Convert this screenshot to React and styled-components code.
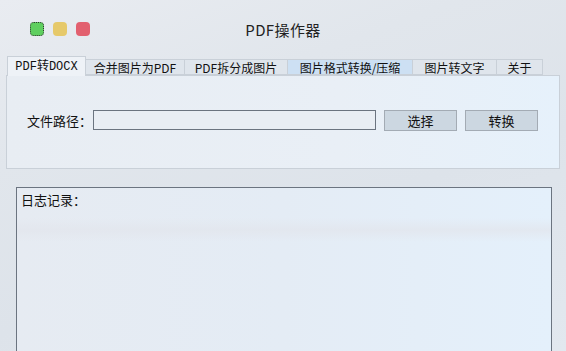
import React, { useState } from "react"
import styled, { createGlobalStyle } from "styled-components"

const Global = createGlobalStyle`
  html, body {
    margin: 0;
    padding: 0;
    width: 566px;
    height: 351px;
    overflow: hidden;
  }
  body {
    font-family: "Noto Sans CJK SC", "Liberation Sans", sans-serif;
    color: #111;
  }
`

const Window = styled.div`
  width: 566px;
  height: 351px;
  overflow: hidden;
  display: flex;
  flex-direction: column;
  background: linear-gradient(160deg, #e9ecf1 0%, #e1e6ec 30%, #dde3ea 60%, #e2e8ef 100%);
`

const TitleBar = styled.div`
  position: relative;
  height: 56px;
  display: flex;
  align-items: center;
  justify-content: center;
`

const Lights = styled.div`
  position: absolute;
  left: 30px;
  top: 22px;
  display: flex;
  gap: 9px;
`

const Light = styled.span`
  width: 14px;
  height: 14px;
  border-radius: 4px;
  background: ${p => p.color};
  box-sizing: border-box;
  border: ${p => (p.focus ? "1px dotted #333" : "none")};
`

const Title = styled.div`
  font-size: 15px;
  color: #222;
  padding-top: 2px;
  letter-spacing: 0.4px;
`

const TabBar = styled.div`
  display: flex;
  align-items: flex-end;
  height: 19px;
  padding-left: 7px;
`

const Tab = styled.div`
  box-sizing: border-box;
  width: ${p => p.w}px;
  height: ${p => (p.active ? 20 : 16)}px;
  margin-bottom: ${p => (p.active ? -1 : 0)}px;
  display: flex;
  align-items: center;
  justify-content: center;
  padding-top: 1px;
  font-size: 12px;
  line-height: 1;
  font-family: ${p => (p.mono ? '"Liberation Mono", "Noto Sans CJK SC", monospace' : '"Noto Sans CJK SC", sans-serif')};
  background: ${p => (p.active ? "#eef2f7" : p.hover ? "#cde0f3" : "#dfe5ec")};
  border: 1px solid #c9d0d8;
  border-bottom: ${p => (p.active ? "none" : "1px solid #c9d0d8")};
  border-left: ${p => (p.first || p.active ? "1px solid #c9d0d8" : "none")};
  position: relative;
  z-index: ${p => (p.active ? 2 : 1)};
  color: #111;
`

const Pane = styled.div`
  box-sizing: border-box;
  margin: 0 6px 0 6px;
  height: 94px;
  border: 1px solid #c9d0d8;
  background: linear-gradient(90deg, #e8edf3 0%, #e9eff6 60%, #e6f1fb 100%);
  display: flex;
  align-items: center;
  padding: 0 0 4px 20px;
`

const Label = styled.span`
  font-size: 13px;
  width: 66px;
`

const Input = styled.div`
  box-sizing: border-box;
  width: 283px;
  height: 20px;
  border: 1px solid #6b7480;
  background: #e9eef4;
`

const Button = styled.div`
  box-sizing: border-box;
  width: 73px;
  height: 21px;
  margin-left: ${p => p.gap}px;
  background: #ccd7e1;
  border: 1px solid #a3abb4;
  display: flex;
  align-items: center;
  justify-content: center;
  font-size: 13px;
`

const LogBox = styled.div`
  box-sizing: border-box;
  margin: 18px 0 0 16px;
  width: 536px;
  flex: 1;
  border: 1px solid #6b7480;
  border-bottom: none;
  background: linear-gradient(90deg, #e6ebf2 0%, #e4ecf5 50%, #e4f0fb 100%);
  padding: 2px 4px;
  font-size: 13px;
  position: relative;
`

const Band = styled.div`
  position: absolute;
  left: 0;
  right: 0;
  top: 30px;
  height: 24px;
  background: linear-gradient(180deg, rgba(225,228,235,0) 0%, rgba(226,229,236,0.7) 50%, rgba(225,228,235,0) 100%);
  pointer-events: none;
`

const LogText = styled.div`
  position: relative;
`

const tabs = [
  { label: "PDF转DOCX", w: 79, mono: true },
  { label: "合并图片为PDF", w: 99 },
  { label: "PDF拆分成图片", w: 103 },
  { label: "图片格式转换/压缩", w: 125 },
  { label: "图片转文字", w: 84 },
  { label: "关于", w: 46 },
]

export default function App() {
  const [active] = useState(0)
  return (
    <>
      <Global />
      <Window>
        <TitleBar>
          <Lights>
            <Light color="#5fcf5f" focus />
            <Light color="#e6c96a" />
            <Light color="#e2606f" />
          </Lights>
          <Title>PDF操作器</Title>
        </TitleBar>
        <TabBar>
          {tabs.map((t, i) => (
            <Tab
              key={i}
              w={t.w}
              mono={t.mono}
              first={i === 0}
              active={i === active}
              hover={i === 3}
            >
              {t.label}
            </Tab>
          ))}
        </TabBar>
        <Pane>
          <Label>文件路径：</Label>
          <Input />
          <Button gap={8}>选择</Button>
          <Button gap={8}>转换</Button>
        </Pane>
        <LogBox>
          <Band />
          <LogText>日志记录：</LogText>
        </LogBox>
      </Window>
    </>
  )
}
